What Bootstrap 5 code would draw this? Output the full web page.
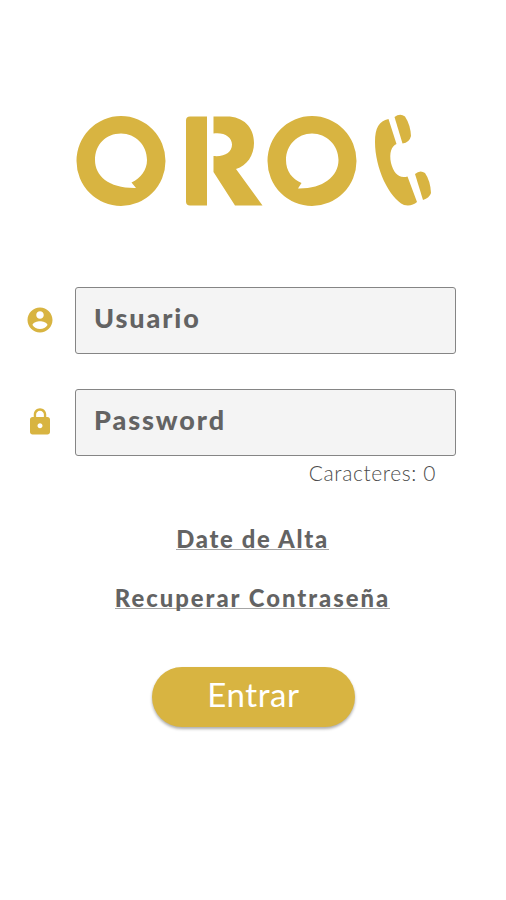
<!DOCTYPE html>
<html lang="es">
<head>
<meta charset="utf-8">
<meta name="viewport" content="width=device-width, initial-scale=1">
<title>ORO</title>
<link href="https://cdn.jsdelivr.net/npm/bootstrap@5.3.0/dist/css/bootstrap.min.css" rel="stylesheet">
<style>
:root { --gold: #d8b441; --ink: #636363; }
body { font-family: Lato, "Liberation Sans", sans-serif; color: var(--ink); background: #fff; }
.screen { height: 900px; padding: 110px 50px 0 25px; }
.logo { width: 370px; height: 100px; margin-left: 45px; fill: var(--gold); }
.login { margin-top: 77px; }
.field { gap: 20px; }
.field + .field { margin-top: 35px; }
.field svg { width: 30px; height: 30px; margin-bottom: 1px; fill: var(--gold); }
.field .form-control { height: 67px; padding: 0 18px 6px; border: 1px solid #858585; border-radius: 3px; background: #f4f4f4; font-size: 27px; font-weight: 900; letter-spacing: 1.9px; color: var(--ink); }
.field .form-control::placeholder { color: var(--ink); opacity: 1; }
.counter { height: 36px; line-height: 34px; font-size: 21px; font-weight: 300; margin-right: 20px; letter-spacing: .6px; color: #4c4c4c; }
.links { margin: 32px 0 0 0; }
.links a { color: var(--ink); font-size: 23.8px; font-weight: 900; letter-spacing: 1.7px; line-height: 31px; text-decoration: none; border-bottom: 1px solid #a5a5a5; height: 26px; display: block; white-space: nowrap; }
.links a + a { margin-top: 33px; letter-spacing: 2px; }
.enter { width: 203px; height: 60px; margin: 58px 0 0 127px; padding: 0 0 4px; border: 0; border-radius: 30px; background: var(--gold); color: #fff; font-size: 33px; letter-spacing: .6px; box-shadow: 0 2px 3px rgba(0,0,0,.32); }
</style>
</head>
<body>
<main class="screen d-flex flex-column">
  <svg class="logo d-block flex-shrink-0" viewBox="70 110 370 100" role="img" aria-label="ORO">
    <path fill-rule="evenodd" d="M121 116a44.5 45 0 1 1 0 90a44.5 45 0 1 1 0-90ZM121 133.500C106 133.500 95 144.500 95 160C95 176 109 188.500 136 188L131.500 182.500C141 178 147 170 147 160C147 145 135.500 133.500 121 133.500Z"/>
    <path d="M190 116.500H207V205.500H190Q186 205.500 186 201.500V120.500Q186 116.500 190 116.500Z"/>
    <path d="M213.500 116.500H227C243 116.500 254 127 254 143C254 155 247 166 236 169L262.500 205.500H235L213.500 172V156C225 157 232 152 232 144.500C232 137 224 132 213.500 133.500Z"/>
    <path fill-rule="evenodd" d="M312 116a44.500 45 0 1 1 0 90a44.500 45 0 1 1 0-90ZM312 133.500C297.500 133.500 286 145 286 160C286 171 292 179 301.500 183L298 188.500C322 189 338.500 177 338.500 160C338.500 145 326.500 133.500 312 133.500Z"/>
    <path d="M388.500 119L396.500 144C391.500 146 389 153 391 163C393.500 173 399 179 407.500 176.500L417 202Q412 206.500 404 205C389 198 375 168 375 142C375 128 379 121 388.500 119Z"/>
    <path d="M394.500 117Q400 113 405 116.500Q410.500 125 411 136Q409.500 142.500 402.500 143.500Z"/>
    <path d="M415 174Q420 169.500 425 173Q430.500 181 431 193Q429.500 198 423 200Z"/>
  </svg>
  <form class="login">
    <div class="field d-flex align-items-center">
      <svg class="flex-shrink-0" viewBox="0 0 24 24" aria-hidden="true"><path d="M12 2C6.480 2 2 6.480 2 12s4.480 10 10 10 10-4.480 10-10S17.520 2 12 2zm0 3c1.660 0 3 1.340 3 3s-1.340 3-3 3-3-1.340-3-3 1.340-3 3-3zm0 14.200c-2.500 0-4.710-1.280-6-3.220.030-1.990 4-3.080 6-3.080s5.970 1.090 6 3.080c-1.290 1.940-3.500 3.220-6 3.220z"/></svg>
      <input class="form-control shadow-none" type="text" placeholder="Usuario" aria-label="Usuario">
    </div>
    <div class="field d-flex align-items-center">
      <svg class="flex-shrink-0" viewBox="0 0 24 24" aria-hidden="true"><path d="M18 8h-1V6c0-2.760-2.240-5-5-5S7 3.240 7 6v2H6c-1.100 0-2 .9-2 2v10c0 1.100.9 2 2 2h12c1.100 0 2-.9 2-2V10c0-1.100-.9-2-2-2zm-6 9c-1.100 0-2-.9-2-2s.9-2 2-2 2 .9 2 2-.9 2-2 2zm3.100-9H8.900V6c0-1.710 1.390-3.100 3.100-3.100s3.100 1.390 3.100 3.100v2z"/></svg>
      <input class="form-control shadow-none" type="password" placeholder="Password" aria-label="Password">
    </div>
    <div class="counter text-end">Caracteres: 0</div>
    <nav class="links d-flex flex-column align-items-center ps-4">
      <a href="#">Date de Alta</a>
      <a href="#">Recuperar Contraseña</a>
    </nav>
    <button class="enter btn" type="button">Entrar</button>
  </form>
</main>
<script src="https://cdn.jsdelivr.net/npm/bootstrap@5.3.0/dist/js/bootstrap.bundle.min.js"></script>
</body>
</html>
